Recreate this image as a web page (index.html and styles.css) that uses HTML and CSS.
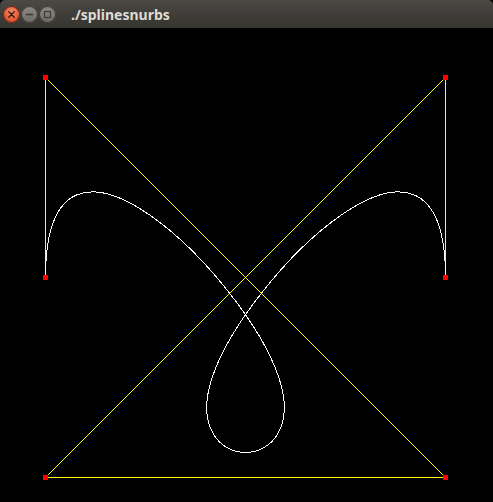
FILE: index.html
```html
<!DOCTYPE html>
<html>
<head>
<meta charset="utf-8">
<title>./splinesnurbs</title>
<link rel="stylesheet" href="styles.css">
</head>
<body>
<div class="window">
  <div class="titlebar">
    <div class="controls">
      <span class="btn close">
        <svg width="17" height="17" viewBox="0 0 17 17"><path d="M5.8 5.8 L11.2 11.2 M11.2 5.8 L5.8 11.2" stroke="#3b1a10" stroke-width="1.4" stroke-linecap="round"/></svg>
      </span>
      <span class="btn">
        <svg width="17" height="17" viewBox="0 0 17 17"><path d="M5 8.5 H12" stroke="#3c3b37" stroke-width="1.6"/></svg>
      </span>
      <span class="btn">
        <svg width="17" height="17" viewBox="0 0 17 17"><rect x="5.5" y="5.5" width="6" height="6" fill="none" stroke="#3c3b37" stroke-width="1.2"/></svg>
      </span>
    </div>
    <span class="title">./splinesnurbs</span>
  </div>
  <div class="canvas">
    <svg class="plot" width="493" height="474" viewBox="0 28 493 474" shape-rendering="crispEdges">
      <polyline points="45.5,277.5 45.5,77.5 445.5,477.5 45.5,477.5 445.5,77.5 445.5,277.5" fill="none" stroke="#ffff00" stroke-width="1"/>
      <path d="M45.5 277.5 C45.5 77.5 245.5 277.5 278.83 377.5 C312.17 477.5 178.83 477.5 212.17 377.5 C245.5 277.5 445.5 77.5 445.5 277.5" fill="none" stroke="#ffffff" stroke-width="1"/>
      <g fill="#ff0000">
        <rect x="43" y="75" width="5" height="5"/>
        <rect x="443" y="75" width="5" height="5"/>
        <rect x="43" y="275" width="5" height="5"/>
        <rect x="443" y="275" width="5" height="5"/>
        <rect x="43" y="475" width="5" height="5"/>
        <rect x="443" y="475" width="5" height="5"/>
      </g>
    </svg>
  </div>
</div>
</body>
</html>
```

FILE: styles.css
```css
html, body {
  margin: 0;
  padding: 0;
  background: #000;
}
.window {
  width: 493px;
  height: 502px;
  display: flex;
  flex-direction: column;
  overflow: hidden;
}
.titlebar {
  height: 28px;
  flex: none;
  display: flex;
  align-items: center;
  background: linear-gradient(#4a4944, #3c3b37 60%, #36352f);
  border-radius: 5px 5px 0 0;
  padding-left: 3px;
  box-sizing: border-box;
}
.controls {
  display: flex;
  gap: 1px;
  margin-top: 1px;
}
.btn {
  width: 17px;
  height: 17px;
  border-radius: 50%;
  background: linear-gradient(#8c8a83, #6c6a64);
  box-shadow: inset 0 0 0 1px #3a3934;
  display: flex;
}
.btn.close {
  background: radial-gradient(circle at 50% 35%, #f58867, #e0502a 70%, #c0401c);
  box-shadow: inset 0 0 0 1px #5a2a18;
}
.title {
  margin-left: 15px;
  font-family: "Noto Sans", "DejaVu Sans", sans-serif;
  font-weight: bold;
  font-size: 14px;
  color: #dfdbd2;
  margin-top: 1px;
}
.canvas {
  flex: 1;
  background: #000;
}
.plot {
  display: block;
}
```
